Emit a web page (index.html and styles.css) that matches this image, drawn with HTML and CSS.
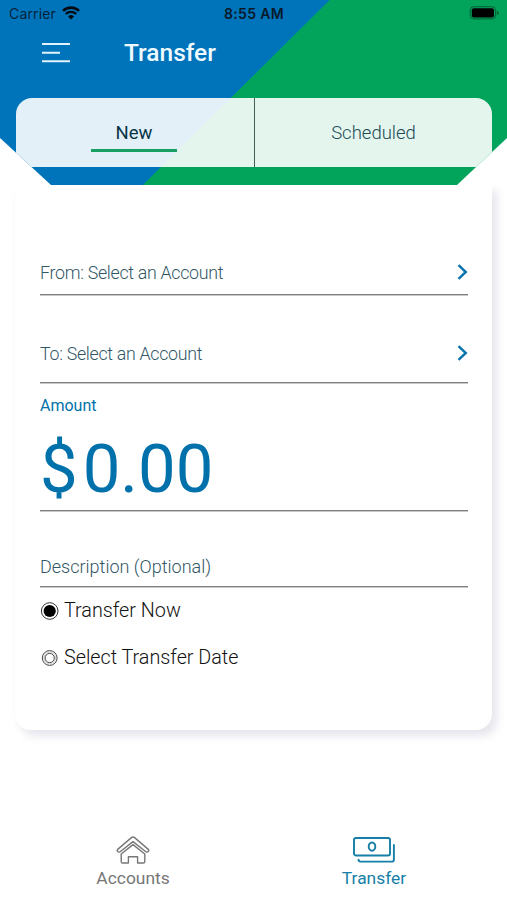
FILE: index.html
```html
<!DOCTYPE html>
<html lang="en">
<head>
<meta charset="utf-8">
<title>Transfer</title>
<link rel="stylesheet" href="styles.css">
</head>
<body>
<div class="app">
  <header class="header">
    <div class="status">
      <div class="carrier"><span class="carrier-name">Carrier</span>
        <svg class="wifi" width="18" height="14" viewBox="0 0 18 14"><path d="M1 4.9A11.4 11.4 0 0 1 17 4.9" fill="none" stroke="currentColor" stroke-width="2.6"/><path d="M3.8 8a7.4 7.4 0 0 1 10.4 0" fill="none" stroke="currentColor" stroke-width="2.4"/><path d="M9 13.4 6 10.5a4.3 4.3 0 0 1 6 0z" fill="currentColor"/></svg>
      </div>
      <span class="clock">8:55 AM</span>
      <svg class="battery" width="30" height="14" viewBox="0 0 30 14"><rect x="1.2" y=".7" width="25.4" height="12.2" rx="3.6" fill="none" stroke="#000" stroke-opacity=".4"/><rect x="2.8" y="2.2" width="22.2" height="9.2" rx="2" fill="#000"/><path d="M27.8 4.8V9q2-.8 2-2.1t-2-2.1" fill="#000" fill-opacity=".4"/></svg>
    </div>
    <div class="nav">
      <svg class="menu" width="28" height="20" viewBox="0 0 28 20"><path d="M0 1h28M0 9.7h18M0 18.3h28" stroke="#e2f4fb" stroke-width="2" fill="none"/></svg>
      <h1 class="title">Transfer</h1>
    </div>
    <div class="tabs">
      <div class="tab tab-active"><span class="tab-label">New</span></div>
      <div class="tab"><span class="tab-label">Scheduled</span></div>
    </div>
  </header>
  <main class="card">
    <div class="field from"><span class="label">From: Select an Account</span><svg class="chevron" width="11" height="16" viewBox="0 0 11 16"><path d="m1.5 1.2 7.3 6.8-7.3 6.8" fill="none" stroke="#0874ae" stroke-width="2.4"/></svg></div>
    <div class="field to"><span class="label">To: Select an Account</span><svg class="chevron" width="11" height="16" viewBox="0 0 11 16"><path d="m1.5 1.2 7.3 6.8-7.3 6.8" fill="none" stroke="#0874ae" stroke-width="2.4"/></svg></div>
    <div class="amount">
      <div class="amount-label">Amount</div>
      <div class="amount-value"><span class="currency">$</span><span class="digits">0.00</span></div>
    </div>
    <div class="field description"><span class="label">Description (Optional)</span></div>
    <div class="option"><svg width="20" height="20" viewBox="0 0 20 20"><circle cx="9.7" cy="10" r="8.3" fill="none" stroke="#333" stroke-width="1"/><circle cx="9.7" cy="10" r="6.1" fill="#000"/></svg><span class="option-now">Transfer Now</span></div>
    <div class="option"><svg width="20" height="20" viewBox="0 0 20 20"><g fill="none" stroke="#444" stroke-width="1"><circle cx="9.7" cy="10" r="7.4"/><circle cx="9.7" cy="10" r="4.6"/><circle cx="9.7" cy="10" r="5.9" stroke-opacity=".25"/></g></svg><span class="option-date">Select Transfer Date</span></div>
  </main>
  <nav class="bottom">
    <a class="item accounts"><svg width="34" height="28" viewBox="0 0 34 28"><g fill="none" stroke="currentColor" stroke-width="1.4" stroke-linejoin="round" stroke-linecap="round"><path d="M15.4 1.6Q17 .4 18.6 1.6L32.3 13.4Q33.3 14.4 32.4 15.3Q31.3 16.7 29.9 15.7L17 5.6 4.1 15.7Q2.7 16.7 1.6 15.3Q.7 14.4 1.7 13.4Z"/><path d="M5.2 18 17 8.6l11.8 9.4v7.4q0 1.6-1.6 1.6h-5.6v-6.2h-9.2V27H6.8q-1.6 0-1.6-1.6Z"/></g></svg><span class="item-label">Accounts</span></a>
    <a class="item transfer"><svg width="42" height="28" viewBox="0 0 42 28"><g fill="none" stroke="currentColor" stroke-width="1.9" stroke-linecap="round"><rect x="1" y="2" width="36" height="17.5" rx="2"/><ellipse cx="19" cy="10.6" rx="3.3" ry="4.1"/><path d="M40.9 9v14.4q0 2.2-2.2 2.2H7.5q-2 0-2-2"/></g></svg><span class="item-label">Transfer</span></a>
  </nav>
</div>
</body>
</html>
```

FILE: styles.css
```css
* { box-sizing: border-box; }
body { margin: 0; background: #fff; font-family: Roboto, "Liberation Sans", sans-serif; }
svg { display: block; flex: none; }
.app { width: 507px; height: 900px; overflow: hidden; display: flex; flex-direction: column; }
.header {
  height: 185px;
  flex: none;
  background: linear-gradient(135.3deg, #0074bb 231.4px, #02a35b 232.4px);
  clip-path: polygon(0 0, 100% 0, 100% 138px, 457px 100%, 51px 100%, 0 138px);
}
.status { height: 27px; padding: 0 8px 0 9px; display: grid; grid-template-columns: 1fr auto 1fr; align-items: center; font-family: Inter, sans-serif; font-size: 14px; line-height: 27px; color: #07192a; }
.carrier { display: flex; align-items: center; gap: 6px; margin-top: -1px; color: #04233b; }
.carrier-name { letter-spacing: .15px; }
.wifi { color: #020b12; }
.clock { font-weight: 600; letter-spacing: .35px; }
.battery { justify-self: end; margin-top: -1px; }
.nav { height: 51px; padding-left: 42px; display: flex; align-items: center; gap: 54px; }
.title { margin: 0; padding-top: 1px; font-size: 24.5px; line-height: 30px; font-weight: 500; color: #eefaff; }
.tabs { height: 69.5px; margin: 19.5px 15px 0 15.5px; display: grid; grid-template-columns: 238.5px 1fr; background: rgba(255,255,255,.89); border-radius: 16px 16px 0 0; overflow: hidden; }
.tab { display: flex; justify-content: center; align-items: flex-start; padding-top: 23.5px; font-size: 18.5px; line-height: 24px; font-weight: 300; color: #214b55; }
.tab-active { padding-right: 1.5px; font-weight: 400; color: #073647; }
.tab + .tab { border-left: 1px solid #405f59; }
.tab-active .tab-label { width: 86px; height: 31px; text-align: center; border-bottom: 3px solid #18a064; }
.card { width: 477px; height: 545px; flex: none; margin-left: 15px; padding: 0 24px 0 25px; border-radius: 0 0 16px 16px; background: #fff; box-shadow: 5px 6px 9px rgba(80,82,135,.15); }
.field { display: flex; justify-content: space-between; align-items: flex-start; border-bottom: 1px solid #808080; box-shadow: 0 1px 0 #c8c8c8; color: #315665; font-size: 18px; line-height: 24px; font-weight: 300; }
.from .label, .to .label { font-size: 17.8px; letter-spacing: -.29px; }
.from { height: 110px; padding-top: 76px; }
.to { height: 88px; padding-top: 47px; }
.chevron { margin-top: 3px; }
.amount { height: 128px; padding-top: 11px; border-bottom: 1px solid #808080; box-shadow: 0 1px 0 #c8c8c8; color: #0071aa; }
.amount-label { font-size: 16px; line-height: 24px; }
.amount-value { display: flex; gap: 5px; font-size: 67px; line-height: 80px; margin-top: 11px; }
.description { height: 76px; padding-top: 44px; margin-bottom: 1px; }
.option { height: 46.5px; display: flex; align-items: center; gap: 4px; font-size: 19.75px; line-height: 24px; font-weight: 300; color: #111; }
.bottom { flex: 1; padding-top: 106px; display: grid; grid-template-columns: 266px 216px; }
.item { display: flex; flex-direction: column; align-items: center; gap: 2px; font-size: 17.4px; line-height: 24px; }
.accounts { color: #777; }
.transfer { color: #167fa7; }
```
